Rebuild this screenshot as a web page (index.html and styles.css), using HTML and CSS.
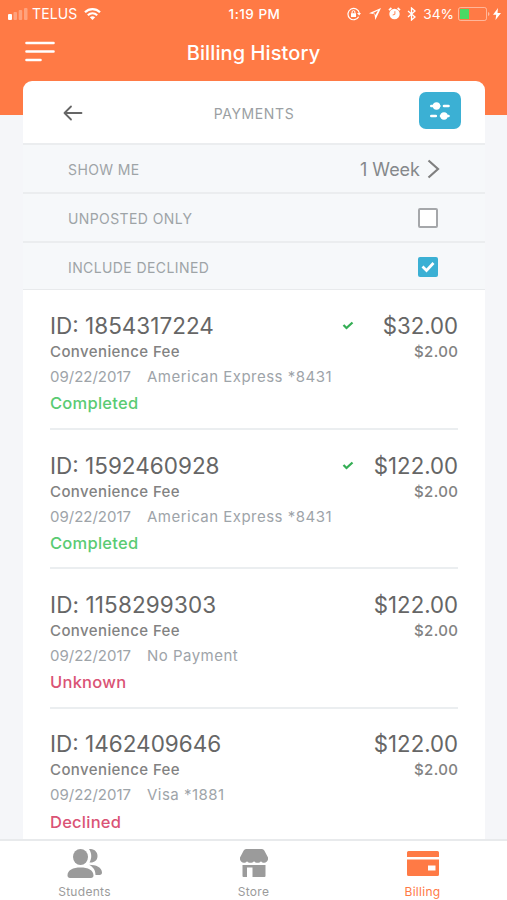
FILE: index.html
```html
<!DOCTYPE html>
<html lang="en">
<head>
<meta charset="utf-8">
<title>Billing History</title>
<link rel="stylesheet" href="styles.css">
</head>
<body>
<div class="app">
  <header class="top">
    <div class="status">
      <div class="status-left">
        <svg class="signal" width="20" height="12" viewBox="0 0 20 12" fill="#fff"><rect x="0" y="6" width="4" height="6" rx="1"/><g opacity=".3"><rect x="5.500" y="4" width="3.500" height="8" rx="1"/><rect x="10.700" y="2" width="3.500" height="10" rx="1"/><rect x="16" y="0" width="3.500" height="12" rx="1"/></g></svg>
        <span class="carrier">TELUS</span>
        <svg width="17" height="12" viewBox="0 0 17 12" fill="none" stroke="#fff" stroke-width="2.200"><path d="M1 4.300C5.300.1 11.700.1 16 4.300M3.800 7.200c2.700-2.500 6.700-2.500 9.400 0"/><path d="M8.500 12 5.800 9.300c1.600-1.400 3.800-1.400 5.400 0Z" fill="#fff" stroke="none"/></svg>
      </div>
      <div class="clock">1:19 PM</div>
      <div class="status-right">
        <svg width="14" height="14" viewBox="0 0 14 14" fill="none" stroke="#fff"><path d="M11.700 9.800A5.700 5.700 0 1 1 12.300 6" stroke-width="1.200"/><path d="m10 6 2.200 2.600L14 6Z" fill="#fff" stroke="none"/><rect x="4" y="6.200" width="5" height="3.800" fill="#fff" stroke="none"/><path d="M5.100 6.300V5a1.400 1.400 0 0 1 2.800 0v1.300"/></svg>
        <svg class="ic-loc" width="12" height="12" viewBox="0 0 12 12" fill="#fff"><path d="M12 0 0 5.200 5.500 6.300 6.300 12ZM9 2.600 6.300 7.300 6 5.800 3.700 5.200Z" fill-rule="evenodd"/></svg>
        <svg class="ic-alarm" width="13" height="13" viewBox="0 0 13 13"><circle cx="6.500" cy="7" r="5.200" fill="#fff"/><path d="M1 3.200 3.400 1M12 3.200 9.600 1" stroke="#fff" stroke-width="1.700"/><path d="M6.900 4.200v3.100L4.700 8" fill="none" stroke="#ff7a45" stroke-width=".9"/></svg>
        <svg class="ic-bt" width="9" height="14" viewBox="0 0 9 14" fill="none" stroke="#fff" stroke-width="1.300"><path d="m1 4 7 6-3.500 3V1L8 4l-7 6"/></svg>
        <span class="percent">34%</span>
        <svg class="ic-bat" width="32" height="14" viewBox="0 0 32 14"><rect x=".5" y=".5" width="28" height="13" rx="2" fill="none" stroke="#fff" stroke-opacity=".45"/><rect x="2" y="2" width="9" height="10" fill="#4cd964"/><path d="M30 5v4q1.500-.5 1.500-2T30 5" fill="#fff" opacity=".5"/></svg>
        <svg class="ic-bolt" width="8" height="12" viewBox="0 0 8 12" fill="#fff"><path d="M5 0 0 6.800h3.200L2.500 12 8 5H4.500Z"/></svg>
      </div>
    </div>
    <div class="nav">
      <svg class="menu" width="30" height="22" viewBox="0 0 30 22" stroke="#fff" stroke-width="2.600" stroke-linecap="round"><path d="M1.500 2h27M1.500 10.500h27M1.500 19h14"/></svg>
      <h1>Billing History</h1>
    </div>
  </header>

  <main class="card">
    <div class="card-head">
      <svg class="back" width="20" height="16" viewBox="0 0 20 16" fill="none" stroke="#666" stroke-width="1.800" stroke-linecap="round" stroke-linejoin="round"><path d="M18.500 8H1.500M8 1.500 1.500 8 8 14.500"/></svg>
      <h2>PAYMENTS</h2>
      <button class="filter" aria-label="Filter"><svg width="20" height="18" viewBox="0 0 20 18" fill="#fff" stroke="#fff" stroke-width="2.600" stroke-linecap="round"><path d="M1.300 4h8M14 4h4.500M1.300 14h4.500M11 14h7.500" /><circle cx="6.500" cy="4" r="3.700" stroke="none"/><circle cx="14" cy="14" r="3.700" stroke="none"/></svg></button>
    </div>
    <div class="option"><span class="label">SHOW ME</span><span class="value">1 Week</span><svg class="chev" width="13" height="20" viewBox="0 0 13 20" fill="none" stroke="#808080" stroke-width="2.200"><path d="m1.500 1.500 9.500 8.500-9.500 8.500"/></svg></div>
    <div class="option"><span class="label">UNPOSTED ONLY</span><span class="box"></span></div>
    <div class="option last"><span class="label">INCLUDE DECLINED</span><span class="box on"><svg width="14" height="12" viewBox="0 0 14 12" fill="none" stroke="#fff" stroke-width="2.700"><path d="m1.500 5.500 4 4 7-7.500"/></svg></span></div>

    <ul class="list">
      <li class="pay">
        <div class="line main"><span class="id">ID: 1854317224</span><svg class="tick" width="12" height="9" viewBox="0 0 12 9" fill="none" stroke="#35ae55" stroke-width="2.300"><path d="m1.500 4 3 3L10.500 1.500"/></svg><span class="amount">$32.00</span></div>
        <div class="line fee"><span>Convenience Fee</span><span class="charge">$2.00</span></div>
        <div class="line meta"><span class="date">09/22/2017</span><span>American Express *8431</span></div>
        <div class="line state ok">Completed</div>
      </li>
      <li class="pay">
        <div class="line main"><span class="id">ID: 1592460928</span><svg class="tick" width="12" height="9" viewBox="0 0 12 9" fill="none" stroke="#35ae55" stroke-width="2.300"><path d="m1.500 4 3 3L10.500 1.500"/></svg><span class="amount">$122.00</span></div>
        <div class="line fee"><span>Convenience Fee</span><span class="charge">$2.00</span></div>
        <div class="line meta"><span class="date">09/22/2017</span><span>American Express *8431</span></div>
        <div class="line state ok">Completed</div>
      </li>
      <li class="pay">
        <div class="line main"><span class="id wide">ID: 1158299303</span><span class="amount">$122.00</span></div>
        <div class="line fee"><span>Convenience Fee</span><span class="charge">$2.00</span></div>
        <div class="line meta"><span class="date">09/22/2017</span><span>No Payment</span></div>
        <div class="line state bad">Unknown</div>
      </li>
      <li class="pay">
        <div class="line main"><span class="id">ID: 1462409646</span><span class="amount">$122.00</span></div>
        <div class="line fee"><span>Convenience Fee</span><span class="charge">$2.00</span></div>
        <div class="line meta"><span class="date">09/22/2017</span><span>Visa *1881</span></div>
        <div class="line state bad">Declined</div>
      </li>
    </ul>
  </main>

  <nav class="tabs">
    <a class="tab"><svg width="36" height="30" viewBox="0 0 36 30" fill="#9b9b9b"><ellipse cx="13.500" cy="8" rx="7.500" ry="8"/><path d="M22 0c5-.4 8.500 2.500 8.500 7S27 14 22.500 13.500c2.400-4 2.400-9.500-.5-13.500ZM.5 26.500C.5 21 6 18.500 13.500 18.500s13 2.500 13 8c0 1.500-1 2.500-2.500 2.500H3C1.500 29 .5 28 .5 26.500ZM22 15.800c7 0 13 2.700 13 7.700 0 1.500-.8 2.500-2.500 2.500H28.500C28.500 21 26 18 22 15.800Z"/></svg><span>Students</span></a>
    <a class="tab"><svg width="28" height="30" viewBox="0 0 28 30" fill="#9b9b9b"><path d="M6 0h16q1.500 0 2.300 1.500L28 8.500c.6 3-1.500 5.300-3.700 5.300-1.500 0-2.500-.6-3.300-1.600-1.600 2.100-5.300 2.100-7 0-1.700 2.100-5.400 2.100-7 0-.8 1-1.800 1.600-3.300 1.600C1.500 13.800-.6 11.500 0 8.500L3.700 1.500Q4.500 0 6 0Z"/><path d="M2.500 16H25.500V27q0 1-1 1H12.500V18.500H7V28H3.500q-1 0-1-1Z"/></svg><span>Store</span></a>
    <a class="tab active"><svg width="32" height="30" viewBox="0 0 32 30" fill="#ff7a45"><path d="M1.500 2h29q1.500 0 1.500 1.500V8H0V3.500Q0 2 1.500 2ZM0 10.500h32V25.500q0 1.500-1.500 1.500h-29Q0 27 0 25.500ZM21 16.500v5h7.500v-5Z" fill-rule="evenodd"/></svg><span>Billing</span></a>
  </nav>
</div>
</body>
</html>
```
FILE: styles.css
```css
* { box-sizing: border-box; }
body {
  margin: 0;
  font-family: Inter, "Liberation Sans", sans-serif;
  background: #f5f6f9;
}
svg { display: block; flex: none; }
.app {
  height: 900px;
  display: flex;
  flex-direction: column;
  overflow: hidden;
}
.top {
  height: 115px;
  flex: none;
  background: #ff7a45;
  color: #fff;
}
.status {
  height: 27px;
  padding: 0 6px 0 8px;
  display: grid;
  grid-template-columns: 1fr auto 1fr;
  align-items: center;
  font-size: 13.500px;
}
.status-left, .status-right { display: flex; align-items: center; }
.status-right { justify-content: flex-end; }
.carrier { margin: 0 7px 0 4px; font-size: 14px; letter-spacing: .1px; }
.clock { font-weight: 550; font-size: 13.500px; letter-spacing: .5px; }
.ic-loc { margin-left: 8px; }
.ic-alarm { margin-left: 7px; }
.ic-bt { margin-left: 6px; }
.percent { margin: 0 4px 0 7px; font-size: 13.700px; }
.ic-bolt { margin-left: 3px; }
.nav {
  height: 50px;
  display: grid;
  grid-template-columns: 1fr auto 1fr;
  align-items: center;
}
.menu { margin-left: 25px; }
h1 { margin: 1px 0 0; font-size: 20px; font-weight: 550; letter-spacing: .1px; }
.card {
  flex: 1;
  min-height: 0;
  margin: -34px 22px 0 23px;
  background: #fff;
  border-radius: 9px 9px 0 0;
  overflow: hidden;
}
.card-head {
  height: 62px;
  padding: 0 24px 3px;
  display: grid;
  grid-template-columns: 1fr auto 1fr;
  align-items: center;
}
h2 {
  margin: 5px 0 0;
  font-size: 14px;
  font-weight: 400;
  letter-spacing: .6px;
  color: #9b9fa3;
}
.back { margin: 5px 0 0 16px; }
.filter {
  width: 42px;
  height: 37px;
  padding: 0;
  border: 0;
  border-radius: 7px;
  background: #3bb0d4;
  display: grid;
  place-items: center;
  justify-self: end;
}
.option {
  height: 49px;
  padding: 1px 47px 0 45px;
  display: flex;
  align-items: center;
  background: #f6f8fa;
  border-top: 2px solid #ebedef;
}
.option.last { padding-top: 2px; border-bottom: 1px solid #e8eaec; }
.label {
  flex: 1;
  font-size: 14px;
  letter-spacing: .4px;
  color: #9ea4a7;
}
.value { font-size: 18px; color: #85888b; }
.chev { margin: 0 -2px 0 7px; }
.box {
  width: 20px;
  height: 20px;
  border: 2px solid #a5a7aa;
  border-radius: 2px;
  background: #fff;
  display: grid;
  place-items: center;
}
.box.on { border: 0; background: #3bb0d4; }
.list { list-style: none; margin: 0; padding: 0 27px; }
.pay {
  height: 139.300px;
  padding-top: 21px;
  border-bottom: 2px solid #ebeef0;
}
.pay:first-child { height: 140px; }
.line { display: flex; justify-content: space-between; align-items: center; }
.main { height: 28px; font-size: 22.500px; color: #666; }
.id { flex: 1; }
.wide { letter-spacing: .12px; }
.tick { margin-right: 1px; }
.amount { width: 103px; text-align: right; font-size: 22.200px; }
.fee { height: 24px; font-size: 15px; font-weight: 450; letter-spacing: .4px; color: #828282; }
.charge { margin-right: -.4px; }
.meta { height: 26px; justify-content: flex-start; font-size: 15px; letter-spacing: .48px; color: #9ea4a9; }
.date { width: 97px; letter-spacing: 0; }
.state { height: 28px; font-size: 16.500px; font-weight: 450; letter-spacing: .25px; }
.ok { color: #5acb73; }
.bad { color: #da5375; }
.tabs {
  height: 61px;
  flex: none;
  border-top: 2px solid #e8eaec;
  background: #fff;
  display: grid;
  grid-template-columns: repeat(3, 1fr);
}
.tab {
  padding-top: 8px;
  display: flex;
  flex-direction: column;
  align-items: center;
  gap: 5px;
  font-size: 12px;
  line-height: 15px;
  letter-spacing: .3px;
  color: #9b9b9b;
}
.active { color: #ff7a45; }
```
